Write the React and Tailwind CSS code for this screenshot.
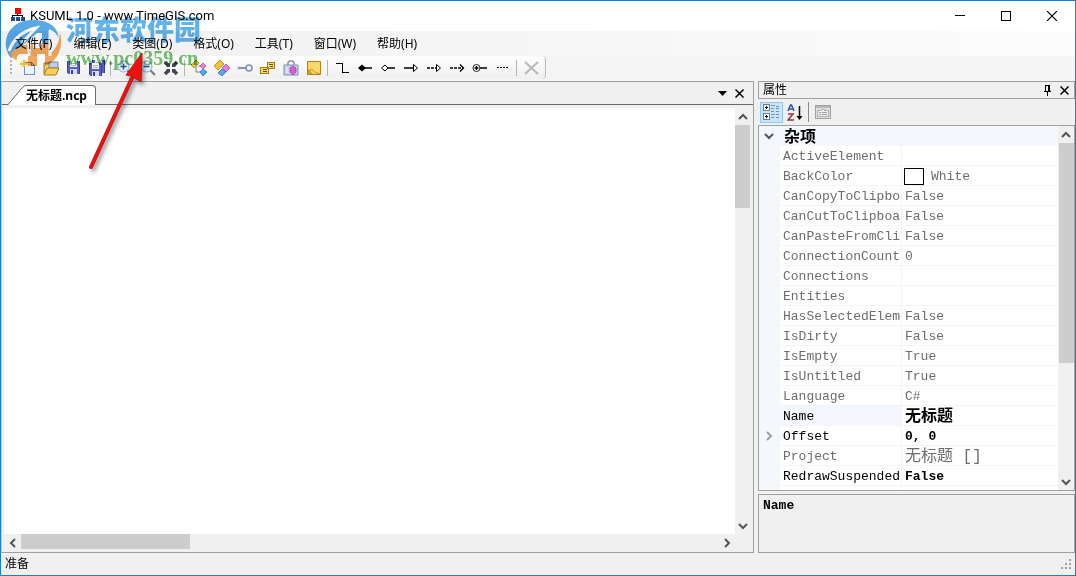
import React, { useState } from 'react'

const menus = ['文件(F)', '编辑(E)', '类图(D)', '格式(O)', '工具(T)', '窗口(W)', '帮助(H)'];

const properties = [
    { name: 'ActiveElement', value: '' },
    { name: 'BackColor', value: 'White', swatch: true },
    { name: 'CanCopyToClipboard', value: 'False' },
    { name: 'CanCutToClipboard', value: 'False' },
    { name: 'CanPasteFromClipboard', value: 'False' },
    { name: 'ConnectionCount', value: '0' },
    { name: 'Connections', value: '' },
    { name: 'Entities', value: '' },
    { name: 'HasSelectedElement', value: 'False' },
    { name: 'IsDirty', value: 'False' },
    { name: 'IsEmpty', value: 'True' },
    { name: 'IsUntitled', value: 'True' },
    { name: 'Language', value: 'C#' },
    { name: 'Name', value: '无标题', editable: true, selected: true, cjk: true },
    { name: 'Offset', value: '0, 0', editable: true, expandable: true },
    { name: 'Project', value: '无标题 []', cjk: true },
    { name: 'RedrawSuspended', value: 'False', editable: true },
    { name: '', value: '' },
];

function Icon({ children, w = 16, h = 16, smooth }) {
    return (
        <svg width={w} height={h} viewBox={`0 0 ${w} ${h}`} fill="none" shapeRendering={smooth ? 'auto' : 'crispEdges'} aria-hidden="true">
            {children}
        </svg>
    );
}

function Floppy({ x = 0, y = 0 }) {
    return (
        <g transform={`translate(${x} ${y})`}>
            <path d="M0 0h13v13h-12l-1-1z" fill="#5b5bc4" />
            <path d="M0 0h1v12h-1zM12 0h1v13h-1z" fill="#3f3f9c" />
            <path d="M3 0h7v6h-7z" fill="#f4f6fc" />
            <path d="M4 2h5v1h-5zM4 4h5v1h-5z" fill="#a8b0d0" />
            <path d="M3 8h7v5h-7z" fill="#d6daee" />
            <path d="M4 9h2v4h-2z" fill="#3f3f9c" />
        </g>
    );
}

const toolGroups = [
    [
        ['新建', <Icon><path d="M4.500 2.500h7l3 3v9h-10z" fill="#eef4ff" stroke="#6f8fc8" /><path d="M11.500 2.500v3h3" stroke="#6f8fc8" /><path d="M3 0h2v7H3zM0 3h8v2H0zM1 1h1v1H1zM6 1h1v1H6zM1 6h1v1H1zM6 6h1v1H6z" fill="#f0bd30" /></Icon>],
        ['打开', <Icon smooth><path d="M1 14V3h5l1 1h6v4" fill="#f5d46c" stroke="#9a7422" /><path d="M6 2h9v6H6z" fill="#b8d0ee" stroke="#7288a8" /><path d="M1 15l3-7h12l-3 7z" fill="#f8cf58" stroke="#a87c20" /></Icon>],
        ['保存', <Icon><Floppy x={1} y={1} /></Icon>],
        ['全部保存', <Icon><Floppy x={3} y={0} /><Floppy x={0} y={3} /></Icon>],
    ],
    [
        ['放大', <Icon smooth><circle cx="6.500" cy="6.500" r="5.500" fill="#e4edfb" stroke="#8aa4d0" /><path d="M3.500 6.500h6M6.500 3.500v6" stroke="#234f9c" strokeWidth="1.500" /><path d="M10.500 10.500L15 15" stroke="#777" strokeWidth="2" /></Icon>],
        ['缩小', <Icon smooth><circle cx="6.500" cy="6.500" r="5.500" fill="#e4edfb" stroke="#8aa4d0" /><path d="M3.500 6.500h6" stroke="#234f9c" strokeWidth="1.500" /><path d="M10.500 10.500L15 15" stroke="#777" strokeWidth="2" /></Icon>],
        ['适合窗口', <Icon smooth><path d="M2 2l4 4M14 2l-4 4M2 14l4-4M14 14l-4-4" stroke="#434950" strokeWidth="3.500" /><path d="M7 3v4H3zM9 3v4h4zM7 13V9H3zM9 13V9h4z" fill="#434950" /></Icon>],
    ],
    [
        ['层次', <Icon smooth><path d="M5 6v6h5M7 6h4" stroke="#6682b4" /><path d="M0 5l5-5 3 3-5 5z" fill="#f4c234" stroke="#a27418" strokeWidth=".7" /><path d="M12 3l3 3-3 3-3-3z" fill="#eb78e4" stroke="#a449a0" strokeWidth=".7" /><path d="M12 9l4 3-4 4-3-4z" fill="#5aa4f4" stroke="#2866b8" strokeWidth=".7" /></Icon>],
        ['类', <Icon smooth><path d="M0 6l6-6 4 4-6 6z" fill="#f4c234" stroke="#a27418" strokeWidth=".7" /><path d="M12 4l4 4-4 4-4-4z" fill="#eb78e4" stroke="#a449a0" strokeWidth=".7" /><path d="M4 13l4-4 4 3-4 4z" fill="#5aa4f4" stroke="#2866b8" strokeWidth=".7" /></Icon>],
        ['接口', <Icon smooth><circle cx="2" cy="8" r="1.500" fill="#8fa2bb" /><path d="M3 8h6" stroke="#8193ac" strokeWidth="2" /><circle cx="12" cy="8" r="3" fill="#eef3fa" stroke="#8193ac" strokeWidth="1.500" /></Icon>],
        ['枚举', <Icon><path d="M7.500 2.500h7v6h-7zM.5 7.500h8v6h-8z" fill="#f7d774" stroke="#a67c16" /><path d="M9 4h4v1H9zM10 6h3v1h-3zM3 9h4v1H3zM3 11h4v1H3z" fill="#6c500e" /></Icon>],
        ['委托', <Icon smooth><path d="M5 5V2.500L6.500 1h3L11 2.500V5" stroke="#8690a8" strokeWidth="1.500" /><path d="M1 5h14v10H1z" fill="#c7d3ea" stroke="#7e8caa" /><path d="M4 7v6M12 7v6" stroke="#edf2fc" /><path d="M10 6l3 2v4l-3 3-3-3V8z" fill="#dd5ad4" stroke="#9b3894" strokeWidth=".7" /></Icon>],
        ['注释', <Icon smooth><path d="M1.500 1.500h13v13h-13z" fill="#fbd767" stroke="#ad8124" /><path d="M2 9l5 5H2z" fill="#d69b1c" /><path d="M2 10c2 1 3 0 4-1 1 2 3 4 8 5" stroke="#c18a18" /></Icon>],
    ],
    [
        ['连线', <Icon><path d="M2 3h7v1H2zM8 3h1v10H8zM8 12h7v1H8z" fill="#000" /></Icon>],
        ['组合', <Icon smooth><path d="M1 8l4-3.500L9 8l-4 3.500z" fill="#000" /><path d="M8 8h7" stroke="#000" strokeWidth="1.500" /></Icon>],
        ['聚合', <Icon smooth><path d="M1.500 8L5 5l3 3-3 3z" fill="#fff" stroke="#000" /><path d="M8 8h7" stroke="#000" strokeWidth="1.500" /></Icon>],
        ['继承', <Icon smooth><path d="M1 8h9" stroke="#000" strokeWidth="1.500" /><path d="M10.500 4.500L14.500 8l-4 3.500z" fill="#fff" stroke="#000" /></Icon>],
        ['实现', <Icon smooth><path d="M1 8h9" stroke="#000" strokeWidth="1.500" strokeDasharray="3 1" /><path d="M10.500 4.500L14.500 8l-4 3.500z" fill="#fff" stroke="#000" /></Icon>],
        ['依赖', <Icon smooth><path d="M1 8h13" stroke="#000" strokeWidth="1.500" strokeDasharray="3 1" /><path d="M11 4.500L14.500 8 11 11.500" stroke="#000" strokeWidth="1.300" /></Icon>],
        ['嵌套', <Icon smooth><circle cx="4.500" cy="8" r="3.500" fill="#fff" stroke="#222" /><path d="M2.500 8h4M4.500 6v4M8 8h7" stroke="#000" strokeWidth="1.300" /></Icon>],
        ['注释连线', <Icon><path d="M2 7.500h12" stroke="#000" strokeDasharray="2 1" /></Icon>],
    ],
    [
        ['删除', <Icon smooth><path d="M2 2l13 12M15 2L2 14" stroke="#b8b8b8" strokeWidth="2" /></Icon>],
    ],
];

const arrows = {
    up: 'M1 7l4-4 4 4',
    down: 'M1 3l4 4 4-4',
    left: 'M7 1L3 5l4 4',
    right: 'M3 1l4 4-4 4',
};

function Chevron({ dir, color = '#555' }) {
    return <Icon w={10} h={10} smooth><path d={arrows[dir]} stroke={color} strokeWidth="2" /></Icon>;
}

function ArrowButton({ dir }) {
    return (
        <button type="button" aria-label={dir} className="w-[17px] h-[17px] shrink-0 flex items-center justify-center">
            <Chevron dir={dir} />
        </button>
    );
}

function CloseIcon({ size = 9 }) {
    return <Icon w={size} h={size} smooth><path d={`M.5 .5L${size - 0.5} ${size - 0.5}M${size - 0.5} .5L.5 ${size - 0.5}`} stroke="#000" strokeWidth="1.500" /></Icon>;
}

function TitleBar() {
    return (
        <header className="h-[30px] shrink-0 bg-white flex items-center pl-2">
            <Icon>
                <path d="M6 0h6v6H6z" fill="#f00" />
                <path d="M8 6h1v2H8zM3 7h11v1H3zM3 7h1v3H3zM13 7h1v3h-1z" fill="#000" />
                <path d="M2 9h4v4H2zM7 9h4v4H7zM12 9h4v4h-4z" fill="#1c4f9c" />
            </Icon>
            <h1 className="ml-[5px] font-['Roboto',sans-serif] text-[13px] text-black flex-1">KSUML 1.0 - www.TimeGIS.com</h1>
            <button type="button" aria-label="最小化" className="w-[46px] h-full flex items-center justify-center">
                <Icon w={10} h={10}><path d="M0 4h10v1H0z" fill="#000" /></Icon>
            </button>
            <button type="button" aria-label="最大化" className="w-[46px] h-full flex items-center justify-center">
                <Icon w={10} h={10}><path d="M.5 .5h9v9h-9z" stroke="#000" /></Icon>
            </button>
            <button type="button" aria-label="关闭" className="w-[46px] h-full flex items-center justify-center">
                <Icon w={10} h={10} smooth><path d="M0 0l10 10M10 0L0 10" stroke="#000" strokeWidth="1.200" /></Icon>
            </button>
        </header>
    );
}

function MenuBar() {
    return (
        <nav className="h-[25px] shrink-0 flex items-center gap-[21px] pl-[14px] text-xs text-black bg-linear-to-r from-[#f0f0f0] to-[#fcfcfc]">
            {menus.map((menu) => <button type="button" key={menu}>{menu}</button>)}
        </nav>
    );
}

function Toolbar() {
    return (
        <div className="h-[25px] shrink-0 flex bg-[#f5f5f5]">
            <div className="flex items-center pl-[9px] pr-[3px] h-[23px] rounded-r bg-linear-to-b from-[#fdfdfd] to-[#f0f0f0] border-r border-[#bbb]">
                <Icon w={3} h={15}><path d="M0 0h2v2H0zM0 4h2v2H0zM0 8h2v2H0zM0 12h2v2H0z" fill="#b4b4b4" /></Icon>
                <div className="w-[3px]"></div>
                {toolGroups.map((group, i) => (
                    <React.Fragment key={i}>
                        {i > 0 && <div className="w-[5px] flex justify-center"><div className="w-px h-4 bg-[#b5b5b5]"></div></div>}
                        {group.map(([label, icon]) => (
                            <button type="button" key={label} aria-label={label} title={label} className="w-[23px] h-[22px] flex items-center justify-center">{icon}</button>
                        ))}
                    </React.Fragment>
                ))}
            </div>
        </div>
    );
}

function DocumentPanel() {
    return (
        <main className="flex-1 min-w-0 flex flex-col border border-[#a0a0a0] border-l-[#c8c8c8] bg-[#f0f0f0]">
            <div className="h-[23px] shrink-0 flex items-end border-b border-[#6a6a6a]">
                <div className="flex items-end pl-[6px] -mb-px">
                    <Icon w={18} h={20} smooth><path d="M0 20L14 3Q16 .5 18 .5V20z" fill="#fff" /><path d="M0 19.500L14 3Q16 .5 18 .5" stroke="#6a6a6a" /></Icon>
                    <button type="button" className="h-5 pr-2 bg-white border-t border-r border-[#6a6a6a] rounded-tr-sm text-xs leading-4 font-bold text-black">无标题.ncp</button>
                </div>
                <div className="ml-auto h-full flex items-center gap-2 pr-[9px]">
                    <button type="button" aria-label="窗口列表"><Icon w={9} h={5} smooth><path d="M0 0h9L4.500 5z" fill="#000" /></Icon></button>
                    <button type="button" aria-label="关闭"><CloseIcon /></button>
                </div>
            </div>
            <div className="flex-1 min-h-0 flex pt-[3px] pl-[2px] pr-[3px]">
                <div className="flex-1 bg-white"></div>
                <div className="w-[15px] flex flex-col items-center">
                    <ArrowButton dir="up" />
                    <div className="w-full h-[83px] bg-[#cdcdcd]"></div>
                    <div className="mt-auto"><ArrowButton dir="down" /></div>
                </div>
            </div>
            <div className="h-[18px] shrink-0 flex items-start pl-[2px] pr-[18px]">
                <ArrowButton dir="left" />
                <div className="w-[169px] h-[15px] bg-[#cdcdcd]"></div>
                <div className="ml-auto"><ArrowButton dir="right" /></div>
            </div>
        </main>
    );
}

function PropertyRow({ item }) {
    const tone = item.editable ? 'text-black' : 'text-[#6d6d6d]';
    return (
        <tr className="h-5">
            <td className="p-0 bg-[#f4f7fc]">
                {item.expandable && <button type="button" aria-label="展开" className="flex w-[19px] justify-center"><Chevron dir="right" color="#a0a0a0" /></button>}
            </td>
            <th scope="row" className={`p-0 pt-[2px] pl-[3px] font-normal text-left overflow-hidden whitespace-nowrap border-b border-r border-[#f0f4fb] ${tone} ${item.selected ? 'bg-[#f4f7fc]' : ''}`}>{item.name}</th>
            <td className={`p-0 pl-[3px] overflow-hidden whitespace-nowrap border-b border-[#f0f4fb] ${tone} ${item.editable ? 'font-bold' : ''} ${item.cjk ? 'text-base leading-4 pt-[3px]' : 'pt-[2px]'}`}>
                {item.swatch ? (
                    <div className="flex items-center gap-[7px] -ml-px">
                        <span className="w-5 h-[17px] border border-black bg-white"></span>{item.value}
                    </div>
                ) : item.value}
            </td>
        </tr>
    );
}

function PropertyPanel() {
    const [sort, setSort] = useState('category');
    return (
        <aside className="w-[317px] shrink-0 flex flex-col">
            <div className="h-[18px] shrink-0 flex items-center pl-1 pr-[5px] gap-2 border border-[#a0a0a0]">
                <h2 className="text-xs leading-4 text-black flex-1">属性</h2>
                <button type="button" aria-label="自动隐藏"><Icon w={9} h={11}><path d="M2 0h5v1H2zM2 0h1v6H2zM5 0h2v6H5zM1 6h7v1H1zM4 7h1v4H4z" fill="#000" /></Icon></button>
                <button type="button" aria-label="关闭"><CloseIcon /></button>
            </div>
            <div className="h-[26px] shrink-0 flex items-center pl-[2px]">
                <button type="button" aria-label="按分类" onClick={() => setSort('category')} className={`w-[23px] h-[21px] flex items-center justify-center border ${sort === 'category' ? 'bg-[#cce4f7] border-[#90c8f6]' : 'border-transparent'}`}>
                    <Icon w={17} h={16}>
                        <path d="M.5 .5h6v6h-6zM.5 9.500h6v6h-6z" fill="#fff" stroke="#5e7fa6" />
                        <path d="M2 3h3v1H2zM3 2h1v3H3zM2 12h3v1H2zM3 11h1v3H3z" fill="#000" />
                        <path d="M8 1h4v1H8zM13 2h3v1h-3zM8 4h3v1H8zM13 4h3v1h-3zM8 7h3v1H8zM13 7h3v1h-3zM8 10h4v1H8zM13 10h3v1h-3zM8 13h3v1H8zM13 13h3v1h-3z" fill="#7192ba" />
                    </Icon>
                </button>
                <button type="button" aria-label="按字母" onClick={() => setSort('alpha')} className={`w-[23px] h-[21px] flex items-center justify-center border ${sort === 'alpha' ? 'bg-[#cce4f7] border-[#90c8f6]' : 'border-transparent'}`}>
                    <Icon w={16} h={17} smooth>
                        <path d="M1 7l2.500-6h1L7 7M2 5h4" stroke="#2d55a8" strokeWidth="1.500" />
                        <path d="M1 10h5L1 16h6" stroke="#9c3434" strokeWidth="1.500" />
                        <path d="M12.500 2v12" stroke="#000" strokeWidth="1.500" /><path d="M9.500 12h6l-3 4z" fill="#000" />
                    </Icon>
                </button>
                <div className="w-px h-5 bg-[#888] mx-[2px]"></div>
                <button type="button" aria-label="属性页" disabled className="w-[23px] h-[21px] flex items-center justify-center">
                    <Icon><path d="M.5 1.500h15v13H.5z" fill="#e2e2e2" stroke="#a0a0a0" /><path d="M1 2h14v2H1z" fill="#b8b8b8" /><path d="M2.500 6.500h3l1-1h3v1h4v6h-11z" fill="#efefef" stroke="#b0b0b0" /><path d="M4 8h2v1H4zM7 8h5v1H7zM4 10h2v1H4zM7 10h5v1H7z" fill="#a0a0a0" /></Icon>
                </button>
            </div>
            <div className="flex-1 min-h-0 flex border border-[#a0a0a0] bg-white">
                <div className="flex-1 min-w-0 overflow-hidden">
                    <table className="w-full table-fixed border-separate border-spacing-0 font-['Liberation_Mono','Noto_Sans_CJK_SC',monospace] text-[13px] leading-[17px]">
                        <colgroup>
                            <col className="w-[21px]" />
                            <col className="w-[122px]" />
                            <col />
                        </colgroup>
                        <thead>
                            <tr className="h-5 bg-[#f4f7fc]">
                                <th className="p-0"><button type="button" aria-label="折叠" className="flex w-[19px] justify-center"><Chevron dir="down" /></button></th>
                                <th colSpan={2} className="p-0 pt-1 pl-1 text-left text-base leading-4 font-bold text-black">杂项</th>
                            </tr>
                        </thead>
                        <tbody>
                            {properties.map((item) => <PropertyRow key={item.name} item={item} />)}
                        </tbody>
                    </table>
                </div>
                <div className="w-4 bg-[#f0f0f0] flex flex-col items-center">
                    <ArrowButton dir="up" />
                    <div className="w-[15px] h-[220px] bg-[#cdcdcd]"></div>
                    <div className="mt-auto"><ArrowButton dir="down" /></div>
                </div>
            </div>
            <div className="mt-[3px] h-[59px] shrink-0 border border-[#a0a0a0] px-1 pt-px font-['Liberation_Mono',monospace] text-[13px] font-bold text-black">Name</div>
        </aside>
    );
}

function Watermark() {
    return (
        <div className="absolute left-1 top-3 flex pointer-events-none opacity-80 mix-blend-multiply" aria-hidden="true">
            <svg width="58" height="56" viewBox="0 0 58 56" fill="none">
                <mask id="logo-cut">
                    <path d="M0 0h58v56H0z" fill="#fff" />
                    <path d="M4 38C8 27 17 18 31 15L17 30M24 31v12M45 18v25" stroke="#000" strokeWidth="3" />
                </mask>
                <g mask="url(#logo-cut)">
                    <path d="M1 28C3 14 14 7 28 7c12 0 24 4 26 18-2-4-5-7-10-9v16h-7V20h-5L17 33l-4 9-7 3C2 40 0 34 1 28z" fill="#2e94e0" />
                    <path d="M55 19c4 16-3 30-15 34V41h-8v12h-9V41h-9c-2 2-3 5-2 7-3-2-5-4-7-7 6-7 14-9 18-10h5v4h8v-5h8v12c7-6 11-14 11-23z" fill="#f49236" />
                </g>
            </svg>
            <div className="flex flex-col pl-[3px]">
                <span className="text-[27px] leading-[34px] font-black text-[#3a9fe8]">河东软件园</span>
                <span className="font-['Liberation_Serif',serif] text-xl leading-[22px] font-bold text-[#4fb04a]">www.pc0359.cn</span>
            </div>
        </div>
    );
}

function Pointer() {
    return (
        <svg width="66" height="130" viewBox="0 0 66 130" className="absolute left-[85px] top-[45px] pointer-events-none drop-shadow-[2px_3px_2px_rgba(0,0,0,0.45)]" aria-hidden="true">
            <path d="M5 121L46 32" stroke="#b81414" strokeWidth="4" strokeLinecap="round" />
            <path d="M56 7L40 29l6 1 9 6z" fill="#f01010" stroke="#b81414" />
            <path d="M5 121L46 32" stroke="#f01010" strokeWidth="2.500" strokeLinecap="round" />
        </svg>
    );
}

export default function App() {
    return (
        <div className="relative h-screen flex flex-col overflow-hidden border border-[#1b80d0] bg-[#f0f0f0] font-['Noto_Sans','Noto_Sans_CJK_SC',sans-serif]">
            <TitleBar />
            <MenuBar />
            <Toolbar />
            <div className="flex-1 min-h-0 flex gap-1">
                <DocumentPanel />
                <PropertyPanel />
            </div>
            <footer className="h-[22px] shrink-0 flex items-center pl-1 pr-[3px] text-xs text-black">
                <span className="flex-1">准备</span>
                <Icon w={11} h={11}><path d="M8 0h2v2H8zM4 4h2v2H4zM8 4h2v2H8zM0 8h2v2H0zM4 8h2v2H4zM8 8h2v2H8z" fill="#a0a0a0" /></Icon>
            </footer>
            <Watermark />
            <Pointer />
        </div>
    );
}
